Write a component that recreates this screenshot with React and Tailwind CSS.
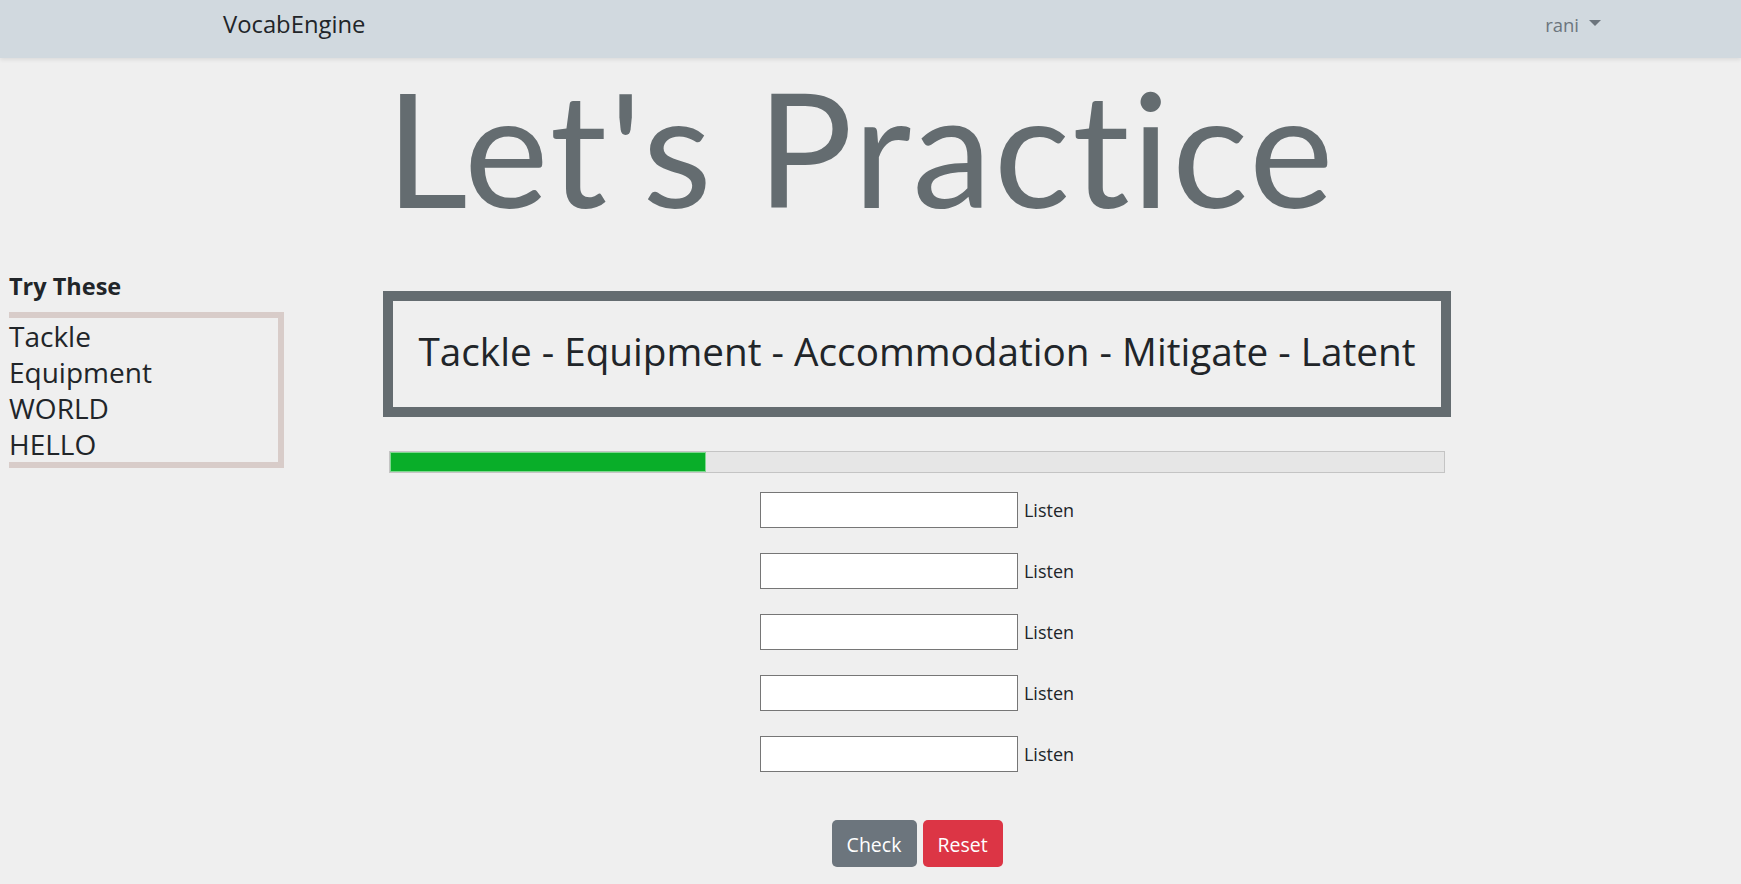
import React from "react";

const body = { fontFamily: '"Open Sans", "Noto Sans", sans-serif' };

function InputRow() {
  return (
    <div className="flex items-center">
      <input
        type="text"
        className="w-[258px] h-[36px] bg-white border border-[#767676] outline-none"
      />
      <span className="ml-[6px] text-[18px] text-[#212529] leading-none">Listen</span>
    </div>
  );
}

export default function App() {
  const words = ["Tackle", "Equipment", "WORLD", "HELLO"];
  return (
    <div className="min-h-screen bg-[#efefef] text-[#212529]" style={body}>
      <nav className="h-[58px] bg-[#d1d9df] shadow-[0_2px_4px_rgba(0,0,0,0.08)] flex items-center justify-between pl-[223px] pr-[140px] pb-[8px]">
        <span className="text-[23.8px] text-[#212529] leading-none">VocabEngine</span>
        <div className="flex items-center gap-[10px] text-[#6c757d]">
          <span className="text-[18.5px] leading-none">rani</span>
          <span className="w-0 h-0 border-l-[6px] border-r-[6px] border-t-[6px] border-l-transparent border-r-transparent border-t-[#6c757d] mt-[-4px]"></span>
        </div>
      </nav>

      <h1
        className="text-center text-[160px] leading-none tracking-[2px] pr-[20px] text-[#646c70] mt-[8px] h-[159px]"
        style={{ fontFamily: 'Lato, "Open Sans", sans-serif' }}
      >
        Let's Practice
      </h1>

      <div className="flex mt-[48px]">
        <aside className="w-[383px] pl-[9px]">
          <div className="text-[23.5px] font-bold leading-[26px] h-[27px]">Try These</div>
          <div className="mt-[12px] w-[275px] border-t-[6px] border-r-[6px] border-b-[6px] border-[#d8ccc9]">
            {words.map((w) => (
              <div key={w} className="text-[28px] leading-[36px]">
                {w}
              </div>
            ))}
          </div>
        </aside>

        <main className="w-[1068px] pt-[18px] flex flex-col">
          <div className="h-[126px] border-[10px] border-[#646c70] flex items-center justify-center pb-[6px]">
            <span className="text-[38.7px] leading-none text-[#212529]">
              Tackle - Equipment - Accommodation - Mitigate - Latent
            </span>
          </div>

          <div className="mt-[34px] mx-[6px] h-[22px] border border-[#c4c4c4] bg-[#e6e6e6] flex">
            <div className="w-[30%] h-full bg-[#09ae29] border border-[#7fd88f]"></div>
          </div>

          <div className="mt-[19px] flex flex-col items-center gap-[25px]">
            <InputRow />
            <InputRow />
            <InputRow />
            <InputRow />
            <InputRow />
          </div>

          <div className="mt-[48px] flex justify-center gap-[6px]">
            <button className="w-[85px] h-[47px] rounded-[5px] bg-[#6c757d] text-white text-[19.5px] pt-[2px]">
              Check
            </button>
            <button className="w-[80px] h-[47px] rounded-[5px] bg-[#dc3545] text-white text-[19.5px] pt-[2px]">
              Reset
            </button>
          </div>
        </main>
      </div>
    </div>
  );
}
